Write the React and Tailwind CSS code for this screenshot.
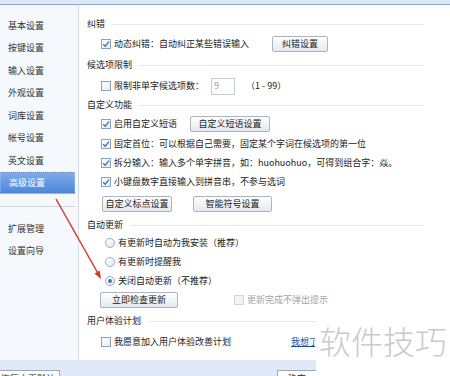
import React from 'react'

const Check = ({ checked, disabled }) => (
  <span
    className={`w-[10px] h-[10px] shrink-0 flex items-center justify-center border ${
      disabled ? 'border-[#cfd5dd] bg-[#f1f3f6]' : 'border-[#8fa2bd] bg-linear-to-br from-white to-[#e6ebf2]'
    }`}
  >
    {checked && (
      <svg width="8" height="8" viewBox="0 0 8 8">
        <path d="M1.2 4.2 L3.2 6.2 L7 1.6" stroke="#3e70b8" strokeWidth="1.3" fill="none" />
      </svg>
    )}
  </span>
)

const Radio = ({ checked }) => (
  <span className="w-[10px] h-[10px] shrink-0 rounded-full border border-[#9aabc0] bg-linear-to-br from-white to-[#e4e9f0] flex items-center justify-center">
    {checked && <span className="w-[4px] h-[4px] rounded-full bg-[#3f77c8]" />}
  </span>
)

const Btn = ({ children, w }) => (
  <span
    className={`${w} h-[16px] shrink-0 flex items-center justify-center border border-[#a9b5c4] rounded-[2px] bg-linear-to-b from-white to-[#e4e9f0] text-[9px] text-[#222]`}
  >
    {children}
  </span>
)

const Header = ({ children, h = 'h-[20px]', gap = 'ml-[7px]' }) => (
  <div className={`flex items-center ${h}`}>
    <span>{children}</span>
    <div className={`flex-1 ${gap} border-t border-[#e3e8ee]`} />
  </div>
)

const Row = ({ h = 'h-[19px]', children }) => (
  <div className={`flex items-center pl-[14px] gap-[3px] ${h}`}>{children}</div>
)

const sideItems = ['基本设置', '按键设置', '输入设置', '外观设置', '词库设置', '帐号设置', '英文设置']

export default function App() {
  return (
    <div className="relative w-[450px] h-[376px] overflow-hidden bg-white text-[9px] text-[#222] font-['Noto_Sans_CJK_SC',sans-serif]">
      <div className="h-[4px] bg-[#dce8f6]" />
      <div className="h-[1px] bg-[#88a9d5]" />

      <div className="flex h-[355px]">
        {/* sidebar */}
        <div className="w-[79px] shrink-0 border-r border-[#d3dae3] bg-[#f5f8fc] pt-[9px]">
          {sideItems.map((t) => (
            <div key={t} className="h-[22.5px] flex items-center pl-[8px] text-[#333]">
              {t}
            </div>
          ))}
          <div className="h-[22.5px] w-[75px] flex items-center pl-[8px] text-white bg-linear-to-b from-[#7eaaea] to-[#4d86da] border border-dotted border-[#9fbce6]">
            高级设置
          </div>
          <div className="mt-[12px] h-px w-[75px] bg-[#cfd6e0]" />
          <div className="mt-[10px] h-[22.5px] flex items-center pl-[8px] text-[#333]">扩展管理</div>
          <div className="h-[22.5px] flex items-center pl-[8px] text-[#333]">设置向导</div>
        </div>

        {/* main */}
        <div className="flex-1 flex flex-col pl-[8px] pr-[27px] pt-[9px]">
          <Header>纠错</Header>
          <Row h="h-[20px]">
            <Check checked />
            <span>动态纠错：自动纠正某些错误输入</span>
            <span className="ml-[20px]">
              <Btn w="w-[56px]">纠错设置</Btn>
            </span>
          </Row>

          <Header h="h-[22px]">候选项限制</Header>
          <Row h="h-[20px]">
            <Check />
            <span>限制非单字候选项数：</span>
            <span className="ml-[4px] w-[24px] h-[17px] border border-[#c5ccd6] flex items-center pl-[2px] text-[#999]">9</span>
            <span className="ml-[8px]">（1 - 99）</span>
          </Row>

          <Header h="h-[18px]">自定义功能</Header>
          <Row h="h-[20px]">
            <Check checked />
            <span>启用自定义短语</span>
            <span className="ml-[10px]">
              <Btn w="w-[80px]">自定义短语设置</Btn>
            </span>
          </Row>
          <Row>
            <Check checked />
            <span>固定首位：可以根据自己需要，固定某个字词在候选项的第一位</span>
          </Row>
          <Row>
            <Check checked />
            <span>拆分输入：输入多个单字拼音，如：huohuohuo，可得到组合字：焱。</span>
          </Row>
          <Row>
            <Check checked />
            <span>小键盘数字直接输入到拼音串，不参与选词</span>
          </Row>
          <div className="h-[26px] flex items-center pl-[15px] gap-[21px]">
            <Btn w="w-[70px]">自定义标点设置</Btn>
            <Btn w="w-[79px]">智能符号设置</Btn>
          </div>

          <Header h="h-[16px]">自动更新</Header>
          <Row>
            <span className="ml-[1px]" />
            <Radio />
            <span>有更新时自动为我安装（推荐）</span>
          </Row>
          <Row>
            <span className="ml-[1px]" />
            <Radio />
            <span>有更新时提醒我</span>
          </Row>
          <Row>
            <span className="ml-[1px]" />
            <Radio checked />
            <span>关闭自动更新（不推荐）</span>
          </Row>
          <div className="h-[20px] flex items-center pl-[13px]">
            <Btn w="w-[78px]">立即检查更新</Btn>
            <span className="ml-[56px] flex items-center gap-[3px] text-[#a3a3a3]">
              <Check disabled />
              <span>更新完成不弹出提示</span>
            </span>
          </div>

          <Header h="h-[22px]" gap="ml-[8px]">用户体验计划</Header>
          <Row h="h-[20px]">
            <Check />
            <span>我愿意加入用户体验改善计划</span>
            <span className="ml-[57px] w-[24px] overflow-hidden whitespace-nowrap text-[#1d4f9f] underline">我想了解</span>
          </Row>
        </div>
      </div>

      {/* bottom bar */}
      <div className="h-[16px] bg-[#dfe9f7] relative overflow-hidden">
        <span className="absolute left-[-4px] top-[10px] w-[64px] h-[18px] border border-[#9aa8ba] bg-white flex items-start justify-center pt-[1px]">
          恢复本页默认
        </span>
        <span className="absolute left-[277px] top-[10px] w-[40px] h-[18px] border border-[#9aa8ba] bg-white flex items-start justify-center pt-[1px]">
          确定
        </span>
      </div>

      {/* watermark */}
      <div className="absolute right-0 top-[312px] w-[134px] h-[64px] bg-white pl-[3px] pt-[12px]">
        <span className="block text-[32px] leading-[32px] font-light text-[#cacaca] whitespace-nowrap">软件技巧</span>
      </div>

      {/* arrow */}
      <svg className="absolute left-0 top-0 pointer-events-none" width="450" height="376">
        <line x1="56" y1="199" x2="97.5" y2="272.5" stroke="#d63a2e" strokeWidth="1.5" />
        <polygon points="101,279 94.5,273.5 99.7,270.6" fill="#d63a2e" />
      </svg>
    </div>
  )
}
